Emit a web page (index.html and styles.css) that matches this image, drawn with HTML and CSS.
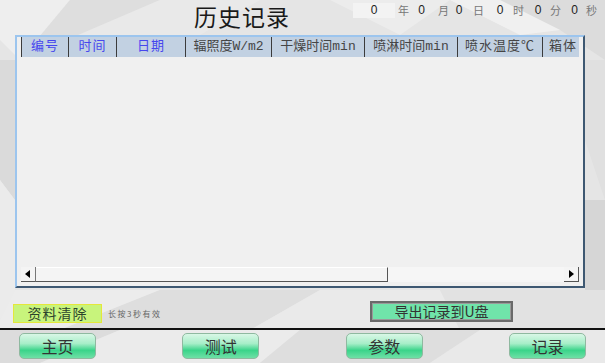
FILE: index.html
```html
<!DOCTYPE html>
<html lang="zh">
<head>
    <meta charset="UTF-8">
    <meta name="viewport" content="width=device-width, initial-scale=1.0">
    <title>历史记录</title>
    <link rel="stylesheet" href="styles.css">
</head>
<body>
<div class="screen">
    <!-- low-poly backdrop -->
    <svg class="backdrop" width="605" height="363" viewBox="0 0 605 363">
        <rect width="605" height="363" fill="#e5e5e5"/>
        <polygon points="0,0 70,0 20,60 0,40" fill="#eeeeee"/>
        <polygon points="70,0 160,0 20,60" fill="#dedede"/>
        <polygon points="160,0 260,0 200,35 20,60" fill="#e9e9e9"/>
        <polygon points="330,0 450,0 400,35" fill="#ececec"/>
        <polygon points="500,0 605,0 605,60 560,30" fill="#dcdcdc"/>
        <polygon points="450,0 500,0 560,30 520,35" fill="#f0f0f0"/>
        <polygon points="0,60 20,60 15,200 0,180" fill="#dadada"/>
        <polygon points="0,180 15,200 15,300 0,320" fill="#ebebeb"/>
        <polygon points="585,60 605,60 605,200 585,140" fill="#e0e0e0"/>
        <polygon points="585,200 605,200 605,300 585,290" fill="#d6d6d6"/>
        <polygon points="15,290 160,290 60,330 0,330 0,320" fill="#ececec"/>
        <polygon points="160,290 320,290 250,330 60,330" fill="#dedede"/>
        <polygon points="320,290 440,290 460,330 250,330" fill="#eaeaea"/>
        <polygon points="440,290 605,290 605,330 460,330" fill="#e2e2e2"/>
        <polygon points="0,330 120,330 40,363 0,363" fill="#dcdcdc"/>
        <polygon points="120,330 300,330 260,363 40,363" fill="#ebebeb"/>
        <polygon points="300,330 480,330 430,363 260,363" fill="#dedede"/>
        <polygon points="480,330 605,330 605,363 430,363" fill="#e9e9e9"/>
    </svg>

    <header class="top">
        <h1 class="title">历史记录</h1>
        <div class="clock">
            <span class="num year">0</span><span class="unit u-year">年</span>
            <span class="num n-month">0</span><span class="unit u-month">月</span>
            <span class="num n-day">0</span><span class="unit u-day">日</span>
            <span class="num n-hour">0</span><span class="unit u-hour">时</span>
            <span class="num n-min">0</span><span class="unit u-min">分</span>
            <span class="num n-sec">0</span><span class="unit u-sec">秒</span>
        </div>
    </header>

    <section class="record-frame">
        <div class="table-head">
            <div class="cell c-no key">编号</div>
            <div class="cell c-time key">时间</div>
            <div class="cell c-date key">日期</div>
            <div class="cell c-irr">辐照度W/m2</div>
            <div class="cell c-dry">干燥时间min</div>
            <div class="cell c-spray">喷淋时间min</div>
            <div class="cell c-temp">喷水温度℃</div>
            <div class="cell c-box">箱体</div>
        </div>
        <div class="table-body"></div>
        <div class="hscroll">
            <span class="arrow arrow-left"></span>
            <span class="thumb"></span>
            <span class="track"></span>
            <span class="arrow arrow-right"></span>
        </div>
    </section>

    <div class="tools">
        <button class="clear-btn">资料清除</button>
        <span class="hint">长按3秒有效</span>
        <button class="export-btn">导出记录到U盘</button>
    </div>

    <nav class="nav">
        <button class="nav-btn">主页</button>
        <button class="nav-btn">测试</button>
        <button class="nav-btn">参数</button>
        <button class="nav-btn">记录</button>
    </nav>
</div>
</body>
</html>
```

FILE: styles.css
```css
* {
    box-sizing: border-box;
}

body {
    margin: 0;
    padding: 0;
    font-family: "Noto Sans CJK SC", sans-serif;
    color: #333;
}

.screen {
    position: relative;
    width: 605px;
    height: 363px;
    overflow: hidden;
    display: flex;
    flex-direction: column;
}

.backdrop {
    position: absolute;
    left: 0;
    top: 0;
    z-index: 0;
}

.top,
.record-frame,
.tools,
.nav {
    position: relative;
    z-index: 1;
}

/* title + clock */
.top {
    height: 35px;
    display: flex;
    align-items: flex-start;
}

.title {
    margin: 0 0 0 194px;
    width: 159px;
    font-size: 23px;
    font-weight: normal;
    line-height: 32px;
    letter-spacing: 1px;
    color: #1a1a1a;
}

.clock {
    display: flex;
    margin-top: 3px;
    height: 15px;
    line-height: 15px;
}

.num {
    font-family: "Liberation Sans", sans-serif;
    font-size: 12px;
    color: #222;
    text-align: center;
}

.unit {
    font-size: 11px;
    color: #777;
}

.year { width: 42px; background: #f3f3f3; }
.u-year { width: 16px; padding-left: 3px; }
.n-month { width: 21px; }
.u-month { width: 17px; padding-left: 6px; }
.n-day { width: 20px; }
.u-day { width: 21px; padding-left: 4px; }
.n-hour { width: 20px; }
.u-hour { width: 18px; padding-left: 3px; }
.n-min { width: 20px; }
.u-min { width: 17px; padding-left: 2px; }
.n-sec { width: 19px; }
.u-sec { width: 21px; padding-left: 2px; }

/* record table */
.record-frame {
    margin-left: 15px;
    width: 570px;
    height: 253px;
    padding: 0 4px 4px 4px;
    background: #f0f0f0;
    border: 2px solid;
    border-color: #9cc5ee #3e5872 #3e5872 #9cc5ee;
    display: flex;
    flex-direction: column;
}

.table-head {
    height: 20px;
    display: flex;
    overflow: hidden;
    background: #c2d1e2;
    white-space: nowrap;
}

.cell {
    flex: none;
    height: 20px;
    line-height: 20px;
    border-left: 1px solid #3c3c3c;
    text-align: center;
    font-family: "Liberation Mono", "Noto Sans CJK SC", monospace;
    font-size: 13px;
    letter-spacing: 1px;
    color: #454545;
}

.cell.key {
    color: #4646ee;
}

.c-no { width: 47px; }
.c-time { width: 48px; }
.c-date { width: 69px; }
.c-irr { width: 86px; letter-spacing: 0; }
.c-dry { width: 93px; letter-spacing: 0; }
.c-spray { width: 93px; letter-spacing: 0; }
.c-temp { width: 85px; }
.c-box { width: 37px; text-align: left; padding-left: 6px; }

.table-body {
    flex: 1;
}

.hscroll {
    height: 15px;
    display: flex;
    background: #f6f6f6;
}

.arrow {
    position: relative;
    width: 15px;
    flex: none;
    border-right: 1px solid #555;
    border-bottom: 1px solid #555;
    background: #f4f4f4;
}

.arrow-left {
    border-right-color: #777;
}

.arrow-left::after,
.arrow-right::after {
    content: "";
    position: absolute;
    top: 3px;
    border-top: 4px solid transparent;
    border-bottom: 4px solid transparent;
}

.arrow-left::after {
    left: 4px;
    border-right: 5px solid #000;
}

.arrow-right::after {
    left: 5px;
    border-left: 5px solid #000;
}

.thumb {
    width: 352px;
    flex: none;
    background: #f4f4f4;
    border-top: 1px solid #fff;
    border-right: 1px solid #555;
    border-bottom: 1px solid #555;
}

.track {
    flex: 1;
}

/* tools row */
.tools {
    height: 40px;
    display: flex;
    align-items: center;
    padding: 6px 0 0 13px;
}

.clear-btn {
    width: 89px;
    height: 19px;
    padding: 0;
    margin-top: 4px;
    background: #c8f47c;
    border: 1px solid #e4e83a;
    font-family: "Noto Sans CJK SC", sans-serif;
    font-size: 14px;
    line-height: 17px;
    letter-spacing: 1px;
    color: #2c442c;
}

.hint {
    margin: 4px 0 0 6px;
    width: 262px;
    font-size: 8px;
    letter-spacing: 1.5px;
    color: #666;
}

.export-btn {
    width: 143px;
    height: 21px;
    padding: 0;
    background: #70e4aa;
    border: 2px solid #6a6a6a;
    box-shadow: inset 0 0 0 1px #9a9a9a;
    font-family: "Noto Sans CJK SC", sans-serif;
    font-size: 14px;
    line-height: 17px;
    color: #333;
}

/* bottom nav */
.nav {
    border-top: 2px solid #111;
    padding: 3px 19px 0 19px;
    display: flex;
    justify-content: space-between;
}

.nav-btn {
    width: 77px;
    height: 26px;
    padding: 0;
    border: 1px solid #8fb9a0;
    border-radius: 5px;
    background: linear-gradient(to bottom, #d9f7e6 0%, #a6eec8 40%, #3ad48a 68%, #6fe0a6 100%);
    font-family: "Noto Sans CJK SC", sans-serif;
    font-size: 16px;
    line-height: 24px;
    color: #333;
}
```
